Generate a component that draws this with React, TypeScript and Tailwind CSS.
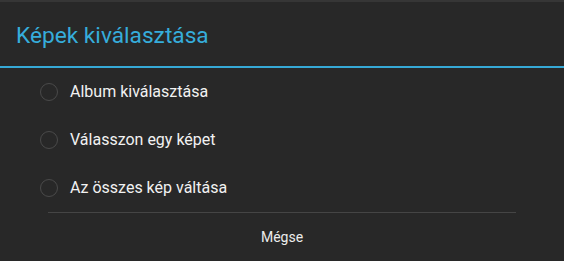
import { useState } from 'react';

const options = ['Album kiválasztása', 'Válasszon egy képet', 'Az összes kép váltása'];

export default function App() {
  const [selected, setSelected] = useState<number | null>(null);

  return (
    <div
      className="w-[564px] h-[261px] bg-[#282828] border-t-2 border-[#363636] flex flex-col overflow-hidden"
      style={{ fontFamily: 'Roboto, "Noto Sans", sans-serif' }}
    >
      <div className="h-[64px] pl-4 pt-[21px]">
        <h1 className="text-[22.7px] leading-[26px] text-[#36addb]">Képek kiválasztása</h1>
      </div>
      <div className="h-[2px] bg-[#36a9d6]" />

      <ul className="flex flex-col">
        {options.map((label, i) => (
          <li key={label}>
            <button
              onClick={() => setSelected(i)}
              className="h-12 w-full flex items-center pl-10 gap-3 text-left"
            >
              <span className="w-[18px] h-[18px] rounded-full border-[1.5px] border-[#4a4a4a] flex items-center justify-center">
                {selected === i && <span className="w-2 h-2 rounded-full bg-[#36addb]" />}
              </span>
              <span className="text-base text-[#f2f2f2]">{label}</span>
            </button>
          </li>
        ))}
      </ul>

      <div className="mx-12 h-px bg-[#454545]" />
      <button className="h-12 w-full flex items-center justify-center text-sm text-[#ececec]">
        Mégse
      </button>
    </div>
  );
}
